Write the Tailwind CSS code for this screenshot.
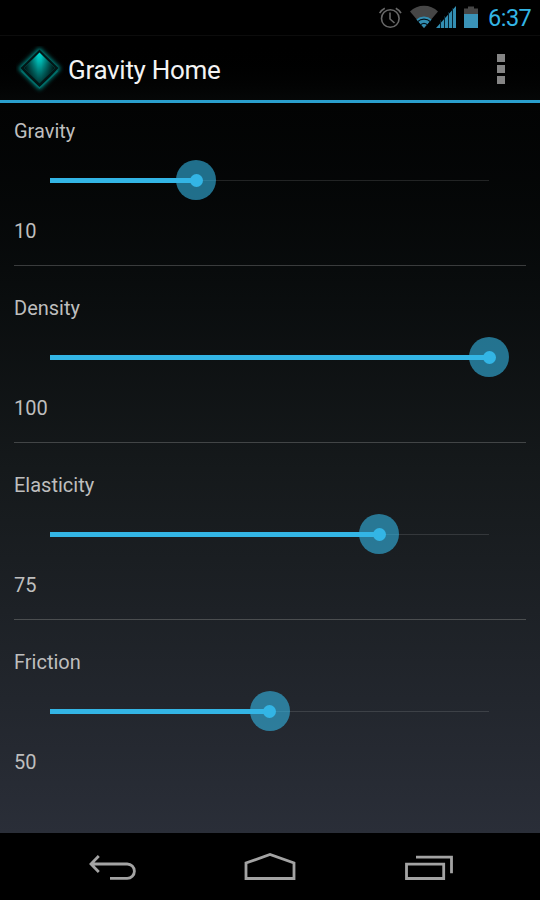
<!DOCTYPE html>
<html lang="en">
<head>
  <meta charset="UTF-8" />
  <meta name="viewport" content="width=device-width, initial-scale=1.0" />
  <title>Gravity Home</title>
  <script src="https://cdn.jsdelivr.net/npm/@tailwindcss/browser@4"></script>
</head>
<body class="w-[540px] h-[900px] overflow-hidden flex flex-col bg-black text-[#bebebe] font-[Roboto,sans-serif]">
  <!-- Status bar -->
  <div class="h-9 shrink-0 flex items-center justify-end pr-[9px] border-b border-[#0c0c0c]">
    <svg class="w-[110px] h-9" viewBox="378 0 110 36" fill="none">
      <g stroke="#686868" stroke-width="1.6">
        <circle cx="390.3" cy="18.5" r="8.8" />
        <path d="M390 12.5v6.5l4.5 4M379.6 13.2a12 12 0 0 1 5.2-5M401 13.2a12 12 0 0 0-5.2-5" />
      </g>
      <path d="M424 28L410 11.500a20 20 0 0 1 28 0z" fill="#464646" />
      <path d="M424 28L416.400 19.500a11 11 0 0 1 15.200 0z" fill="#338eb2" />
      <path d="M417.500 21.700a9.500 9.500 0 0 1 13 0M420.500 24.900a5.500 5.500 0 0 1 7 0" stroke="#04141c" stroke-width="1.200" />
      <path d="M436 28L456 6v22z" fill="#338eb2" />
      <path d="M440.500 20v8M444.500 16v12M448.500 12v16M452.500 8v20" stroke="#062230" stroke-width="1" />
      <path d="M468 6.500h6v2h4V14h-14V8.500h4z" fill="#464646" />
      <path d="M464 14h14v14h-14z" fill="#3a93b8" />
    </svg>
    <span class="text-[23.5px] leading-9 w-[43px] text-[#33b5e5] tracking-[-0.5px] whitespace-nowrap">6:37</span>
  </div>

  <!-- Action bar -->
  <header class="h-[67px] shrink-0 flex items-center justify-between pt-1 pl-4 pr-[35px] border-b-[3px] border-[#2a9fcd] bg-linear-to-b from-black to-[#050707]">
    <div class="flex items-center gap-1">
      <svg class="w-12 h-12" viewBox="0 0 48 48">
        <defs>
          <linearGradient id="gem" x1="0" y1="0" x2="0" y2="1">
            <stop offset="0" stop-color="#00dcd4" />
            <stop offset="0.3" stop-color="#00b4ae" />
            <stop offset="0.7" stop-color="#006a67" />
            <stop offset="1" stop-color="#003836" />
          </linearGradient>
          <linearGradient id="side">
            <stop offset="0" stop-color="#000" stop-opacity="0.9" />
            <stop offset="0.45" stop-color="#000" stop-opacity="0" />
            <stop offset="0.55" stop-color="#000" stop-opacity="0" />
            <stop offset="1" stop-color="#000" stop-opacity="0.9" />
          </linearGradient>
          <filter id="glow" x="-30%" y="-30%" width="160%" height="160%">
            <feGaussianBlur stdDeviation="1.900" />
          </filter>
        </defs>
        <path d="M23.500 3L43.500 22.500L23.500 42.500L3.500 22.500z" fill="#008e89" stroke="#008e89" stroke-width="2" filter="url(#glow)" />
        <path d="M23.500 3.500L42.500 22L23.500 43L4.500 22z" fill="#021616" />
        <path d="M5.500 25L23.500 42L41.500 25" fill="none" stroke="#00706c" stroke-width="1.500" />
        <path d="M23.500 6.500L39 22L23.500 37.500L8 22z" fill="url(#gem)" />
        <path d="M23.500 6.500L39 22L23.500 37.500L8 22z" fill="url(#side)" />
      </svg>
      <h1 class="text-[26px] leading-8 tracking-[-0.3px] text-[#f3f3f3]">Gravity Home</h1>
    </div>
    <div class="flex flex-col gap-[3px] mb-0.5">
      <i class="block w-2 h-2 bg-[#858585]"></i>
      <i class="block w-2 h-2 bg-[#858585]"></i>
      <i class="block w-2 h-2 bg-[#858585]"></i>
    </div>
  </header>

  <!-- Settings -->
  <main class="h-[730px] shrink-0 px-[14px] pt-4 flex flex-col gap-[30px] text-xl leading-6 bg-linear-to-b from-[#020303] via-[#15191b] to-[#2a2e38]">
    <section class="h-[147px] border-b border-[#3a3c3d]">
      <h2>Gravity</h2>
      <div class="relative h-10 mt-[17px] ml-9 mr-[37px] flex items-center">
        <div class="h-px flex-1 bg-white/12"></div>
        <div class="absolute left-0 h-[5px] bg-[#33b5e5]" style="width: 33.3%"></div>
        <div class="absolute size-10 -ml-5 rounded-full bg-[#33b5e5]/60 flex items-center justify-center" style="left: 33.3%"><i class="size-[13px] rounded-full bg-[#33b5e5]"></i></div>
      </div>
      <p class="mt-[19px]">10</p>
    </section>
    <section class="h-[147px] border-b border-[#424546]">
      <h2>Density</h2>
      <div class="relative h-10 mt-[17px] ml-9 mr-[37px] flex items-center">
        <div class="h-px flex-1 bg-white/12"></div>
        <div class="absolute left-0 h-[5px] bg-[#33b5e5]" style="width: 100%"></div>
        <div class="absolute size-10 -ml-5 rounded-full bg-[#33b5e5]/60 flex items-center justify-center" style="left: 100%"><i class="size-[13px] rounded-full bg-[#33b5e5]"></i></div>
      </div>
      <p class="mt-[19px]">100</p>
    </section>
    <section class="h-[147px] border-b border-[#4b4e50]">
      <h2>Elasticity</h2>
      <div class="relative h-10 mt-[17px] ml-9 mr-[37px] flex items-center">
        <div class="h-px flex-1 bg-white/12"></div>
        <div class="absolute left-0 h-[5px] bg-[#33b5e5]" style="width: 75%"></div>
        <div class="absolute size-10 -ml-5 rounded-full bg-[#33b5e5]/60 flex items-center justify-center" style="left: 75%"><i class="size-[13px] rounded-full bg-[#33b5e5]"></i></div>
      </div>
      <p class="mt-[19px]">75</p>
    </section>
    <section class="h-[147px]">
      <h2>Friction</h2>
      <div class="relative h-10 mt-[17px] ml-9 mr-[37px] flex items-center">
        <div class="h-px flex-1 bg-white/12"></div>
        <div class="absolute left-0 h-[5px] bg-[#33b5e5]" style="width: 50%"></div>
        <div class="absolute size-10 -ml-5 rounded-full bg-[#33b5e5]/60 flex items-center justify-center" style="left: 50%"><i class="size-[13px] rounded-full bg-[#33b5e5]"></i></div>
      </div>
      <p class="mt-[19px]">50</p>
    </section>
  </main>

  <!-- Navigation bar -->
  <nav class="h-[67px] shrink-0 pl-[88px] pr-[86px] flex items-center justify-between">
    <svg class="w-12 h-10" viewBox="88 847.500 48 40" fill="none" stroke="#a3a3a3" stroke-width="2.800">
      <path d="M91 864.500h36.200a7.200 7.200 0 0 1 0 14.400H110M98.800 856.500L91 864.500l7.800 8" />
    </svg>
    <svg class="w-[52px] h-10" viewBox="244 847.500 52 40" fill="none" stroke="#a3a3a3" stroke-width="2.800">
      <path d="M246 879V863.500L270 855l24 8.500V879z" />
    </svg>
    <svg class="w-[50px] h-10" viewBox="404 847.500 50 40" fill="none" stroke="#a3a3a3" stroke-width="2.800">
      <path d="M406.500 864.700h37.200v14.300h-37.200zM416 857.700h35.500v16" />
    </svg>
  </nav>
</body>
</html>
